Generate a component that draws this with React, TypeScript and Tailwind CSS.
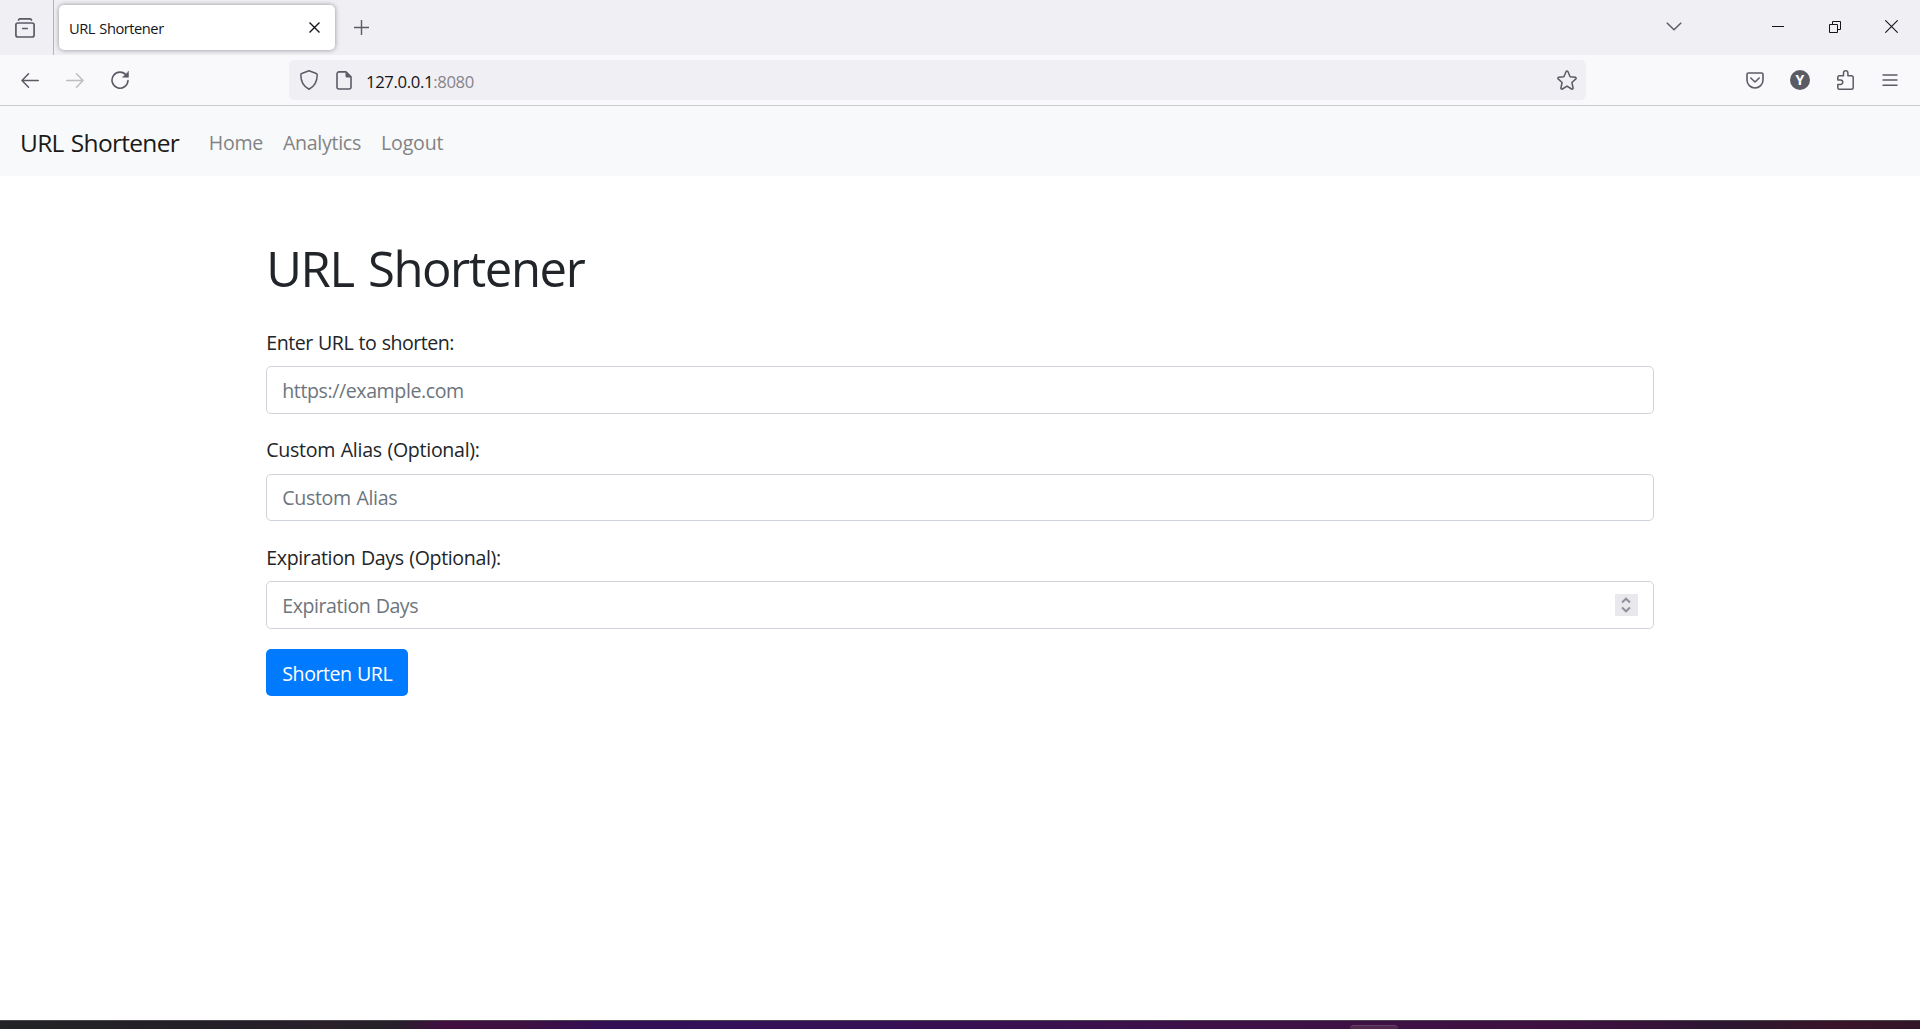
import React from "react";

const glyph = "block shrink-0 fill-none";

type FieldProps = {
  label: string;
  labelClass: string;
  placeholder: string;
  placeholderClass: string;
  stepper?: boolean;
};

function Field({ label, labelClass, placeholder, placeholderClass, stepper }: FieldProps) {
  return (
    <div className="mb-5 flex flex-col">
      <label className="mb-[8px] h-[32px] whitespace-nowrap pt-[0.6px] leading-[31px]">
        <span className={labelClass}>{label}</span>
      </label>
      <div className="flex h-[47.5px] items-center justify-between rounded-[5px] border border-[#ced4da] bg-white pl-[15px] pr-[15px] text-[#6c757d]">
        <span className={placeholderClass}>{placeholder}</span>
        {stepper && (
          <span className="flex h-[22px] w-[23px] flex-col items-center justify-center bg-[#e9e9ed]">
            <svg className={glyph} width="10" height="16" viewBox="0 0 10 16" stroke="#8f8f9d" strokeWidth="2">
              <path d="M1 5.500 5 1.700l4 3.800M1 10.500l4 3.800 4-3.800" />
            </svg>
          </span>
        )}
      </div>
    </div>
  );
}

function TabStrip() {
  return (
    <header className="flex h-[55px] shrink-0 items-stretch bg-[#f0eff4]">
      <div className="flex w-[54px] items-center border-r border-[#b4b3ba] pl-[15px]">
        <svg className={glyph} width="20" height="20" viewBox="0 0 20 20" stroke="#5b5b66" strokeWidth="1.7" strokeLinecap="round">
          <path d="M3.500 2C4 .9 4.700.8 5.500.8h9c.8 0 1.500.1 2 1.200M7.800 10.500h4.400" />
          <rect x="0.900" y="5" width="18.200" height="14" rx="2" />
        </svg>
      </div>
      <div className="my-[5px] ml-[5px] flex w-[276px] items-center justify-between rounded-[5px] bg-white pl-[10px] pr-[15px] shadow-[0_0_5px_rgba(0,0,0,0.4)]">
        <span className="pt-[2px] text-[14.7px] tracking-[-0.48px] [word-spacing:1px] text-[#15141a]">URL Shortener</span>
        <svg className={glyph} width="11" height="11" viewBox="0 0 11 11" stroke="#15141a" strokeWidth="1.4">
          <path d="M.5.5l10 10M10.500.5l-10 10" />
        </svg>
      </div>
      <div className="flex flex-1 items-center pl-[19px]">
        <svg className={glyph} width="15" height="15" viewBox="0 0 15 15" stroke="#5b5b66" strokeWidth="1.4">
          <path d="M7.500 0v15M0 7.500h15" />
        </svg>
      </div>
      <div className="flex items-center pb-[2px] pr-[22px]">
        <svg className={glyph} width="16" height="9" viewBox="0 0 16 9" stroke="#5b5b66" strokeWidth="1.5">
          <path d="M.8.800 8 7.700 15.200.800" />
        </svg>
        <svg className={glyph + " ml-[90px]"} width="12" height="12" viewBox="0 0 12 12" stroke="#15141a">
          <path d="M0 5.500h12" />
        </svg>
        <svg className={glyph + " ml-[45px]"} width="12" height="12" viewBox="0 0 12 12" stroke="#15141a">
          <path d="M.5 3.500h8v8h-8zM3.500 3.500v-3h8v8h-3" />
        </svg>
        <svg className={glyph + " ml-[44px]"} width="13" height="13" viewBox="0 0 13 13" stroke="#15141a" strokeWidth="1.1">
          <path d="M.3.300l12.400 12.400M12.700.300.3 12.700" />
        </svg>
      </div>
    </header>
  );
}

function Toolbar() {
  return (
    <div className="flex h-[51px] shrink-0 items-center border-b border-[#cccbd1] bg-[#f9f9fb]">
      <div className="flex w-[289px] items-center pl-[21px]">
        <svg className={glyph} width="18" height="15" viewBox="0 0 18 15" stroke="#5b5b66" strokeWidth="1.500" strokeLinecap="round" strokeLinejoin="round">
          <path d="M17.300 7.500H1M7.500.8 1 7.500l6.500 6.700" />
        </svg>
        <svg className={glyph + " ml-[27px]"} width="18" height="15" viewBox="0 0 18 15" stroke="#bdbdc2" strokeWidth="1.500" strokeLinecap="round" strokeLinejoin="round">
          <path d="M.7 7.500H17M10.500.8 17 7.500l-6.500 6.700" />
        </svg>
        <svg className={glyph + " ml-[27px]"} width="18" height="18" viewBox="0 0 18 18" stroke="#5b5b66" strokeWidth="1.600" strokeLinecap="round">
          <path d="M15.300 4.200A8 8 0 1 0 17 9.500" />
          <path d="M17.500.5v5.800h-5.800z" fill="#5b5b66" stroke="#5b5b66" strokeWidth=".5" strokeLinejoin="round" />
        </svg>
      </div>
      <div className="flex h-10 w-[1297px] items-center rounded-[5px] bg-[#f0eff4] pl-[11px] pr-[9px]">
        <svg className={glyph} width="18" height="20" viewBox="0 0 18 20" stroke="#5b5b66" strokeWidth="1.500" strokeLinejoin="round">
          <path d="M9 .8 16.300 3.500c.6.2.9.7.9 1.300 0 7-2.200 11.500-8.200 14.400C3 16.300.8 11.800.8 4.800c0-.6.3-1.100.9-1.300z" />
        </svg>
        <svg className={glyph + " ml-[18px]"} width="16" height="19" viewBox="0 0 16 19" stroke="#5b5b66" strokeWidth="1.600" strokeLinejoin="round">
          <path d="M3 .9h7l5 5V16a2 2 0 0 1-2 2H3a2 2 0 0 1-2-2V2.900a2 2 0 0 1 2-2z" />
          <path d="M9.500.9v4a1.500 1.500 0 0 0 1.500 1.500h4z" fill="#5b5b66" stroke="none" />
        </svg>
        <span className="flex-1 pl-[14px] pt-[3px] text-[16.700px] tracking-[-0.36px] text-[#15141a]">
          127.0.0.1<span className="text-[#85848c]">:8080</span>
        </span>
        <svg className={glyph} width="20" height="20" viewBox="0 0 20 20" stroke="#5b5b66" strokeWidth="1.500" strokeLinejoin="round">
          <path d="M9.100 1.500a1 1 0 0 1 1.800 0l2.200 5.200 5.300.6a1 1 0 0 1 .5 1.600l-4 3.600 1.200 5.500a1 1 0 0 1-1.500 1L10 16.100 5.400 19a1 1 0 0 1-1.500-1l1.200-5.500-4-3.600a1 1 0 0 1 .5-1.600l5.300-.6z" />
        </svg>
      </div>
      <div className="flex flex-1 items-center pl-[160px]">
        <svg className={glyph} width="18" height="17" viewBox="0 0 18 17" stroke="#5b5b66" strokeWidth="1.600" strokeLinecap="round" strokeLinejoin="round">
          <path d="M2.500 1h13A1.500 1.500 0 0 1 17 2.500V8A8 8 0 0 1 1 8V2.500A1.500 1.500 0 0 1 2.500 1zM4.800 6 9 10l4.200-4" />
        </svg>
        <span className="ml-[26px] flex size-5 items-center justify-center rounded-full bg-[#5b5b66] font-['Noto_Sans',sans-serif] text-[14px] font-bold leading-none text-white">
          Y
        </span>
        <svg className={glyph + " ml-[27px]"} width="17" height="20" viewBox="0 0 17 20" stroke="#5b5b66" strokeWidth="1.500" strokeLinejoin="round">
          <path d="M6.500 5.800V3a2.200 2.200 0 0 1 4.400 0v2.800h3.800a1.500 1.500 0 0 1 1.500 1.500v10.400a1.500 1.500 0 0 1-1.500 1.500H2.300a1.500 1.500 0 0 1-1.500-1.500v-3.200H3.500a2.200 2.200 0 0 0 0-4.500H.8V7.300a1.500 1.500 0 0 1 1.500-1.500z" />
        </svg>
        <svg className={glyph + " ml-[28px]"} width="16" height="13" viewBox="0 0 16 13" stroke="#5b5b66" strokeWidth="1.400">
          <path d="M.5 1h15M.5 6h15M.5 11.300h15" />
        </svg>
      </div>
    </div>
  );
}

export default function App() {
  return (
    <div className="flex h-[1029px] w-[1920px] flex-col overflow-hidden bg-white font-['Open_Sans','Noto_Sans',sans-serif] text-[19.6px] text-[#212529]">
      <TabStrip />
      <Toolbar />
      <nav className="flex h-[70px] shrink-0 items-center whitespace-nowrap bg-[#f8f9fa] pl-5 pt-[4px]">
        <a className="w-[188.75px] text-[24.5px] tracking-[-0.7px] [word-spacing:1.5px] text-[#1a1a1b]">URL Shortener</a>
        <div className="flex gap-5 text-[#828384]">
          <a className="tracking-[-0.3px]">Home</a>
          <a className="tracking-[-0.3px]">Analytics</a>
          <a className="tracking-[-0.17px]">Logout</a>
        </div>
      </nav>
      <main className="flex flex-1 flex-col items-start px-[266.25px] pt-[62px]">
        <h1 className="mb-[28.25px] h-[60px] text-[49px] leading-[60px] tracking-[-1.4px] [word-spacing:3px]">URL Shortener</h1>
        <form className="w-full">
          <Field
            label="Enter URL to shorten:"
            labelClass="tracking-[-0.5px] [word-spacing:0.8px]"
            placeholder="https://example.com"
            placeholderClass="pt-[1px] tracking-[-0.42px]"
          />
          <Field
            label="Custom Alias (Optional):"
            labelClass="tracking-[-0.3px] [word-spacing:0.9px]"
            placeholder="Custom Alias"
            placeholderClass="pt-[1px] tracking-[-0.33px] [word-spacing:0.8px]"
          />
          <Field
            label="Expiration Days (Optional):"
            labelClass="tracking-[-0.37px] [word-spacing:0.9px]"
            placeholder="Expiration Days"
            placeholderClass="pt-[1px] tracking-[-0.47px] [word-spacing:0.8px]"
            stepper
          />
          <button type="button" className="flex h-[47.5px] w-[142px] items-center justify-center whitespace-nowrap rounded-[5px] bg-[#007bff] pt-[2px] tracking-[-0.48px] text-white [word-spacing:0.8px]">
            Shorten URL
          </button>
        </form>
      </main>
      <footer className="flex h-[9px] shrink-0 items-end border-t border-[#4b454d] bg-[linear-gradient(90deg,#222425_0%,#241f28_12%,#29202a_17%,#252029_20.5%,#400f40_23%,#3f0f41_27%,#311056_32%,#331058_38%,#371052_50%,#3d1048_62%,#3f1041_80%,#38123b_85%,#2b1830_90%,#3a1428_96%,#321528_100%)] pl-[1350px]">
        <span className="h-[4px] w-[48px] rounded-t-[4px] border-t border-[#67406a] bg-[#52284f]" />
      </footer>
    </div>
  );
}
